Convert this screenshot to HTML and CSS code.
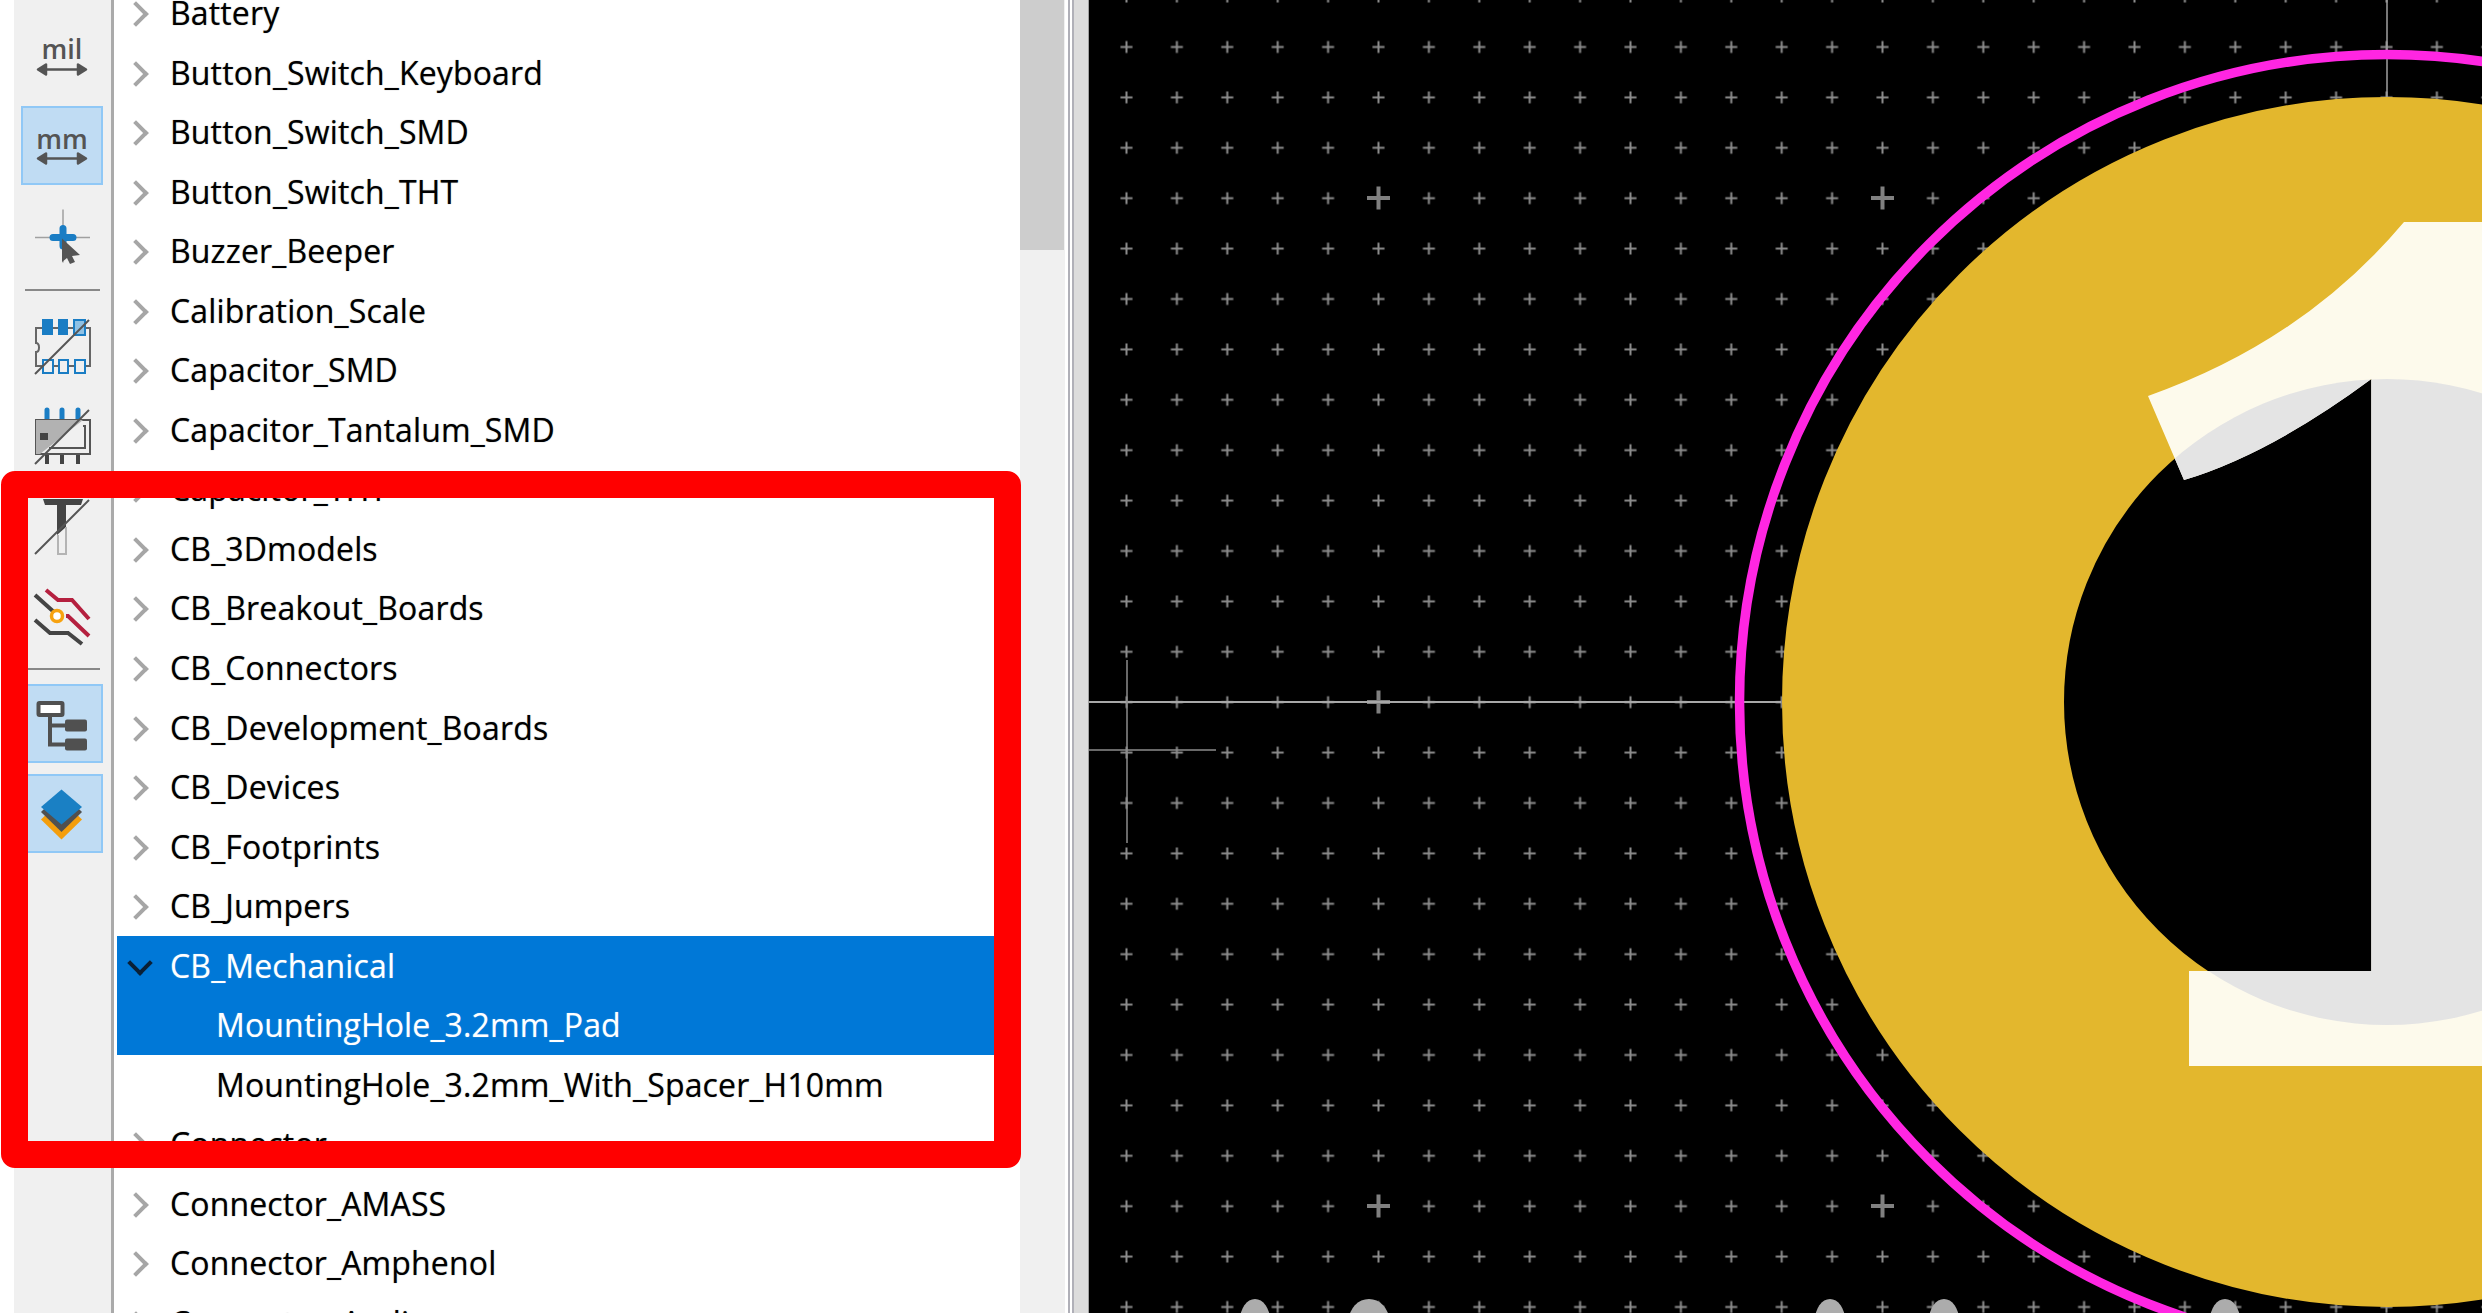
FILE: index.html
```html
<!DOCTYPE html>
<html>
<head>
    <meta charset="utf-8">
    <title>Footprint Editor</title>
    <link rel="stylesheet" href="styles.css">
</head>
<body>
<div class="app">

    <!-- left tool strip -->
    <div class="toolbar">
        <div class="tool">
            <svg class="icon" viewBox="0 0 56 56">
                <text class="unit" x="28" y="30.5" text-anchor="middle">mil</text>
                <path class="arrow" d="M8 41.5H48M4 41.5L12 36.5V46.5ZM52 41.5L44 36.5V46.5Z"/>
            </svg>
        </div>
        <div class="tool active">
            <svg class="icon" viewBox="0 0 56 56">
                <text class="unit" x="28" y="30.5" text-anchor="middle">mm</text>
                <path class="arrow" d="M8 40.5H48M4 40.5L12 35.5V45.5ZM52 40.5L44 35.5V45.5Z"/>
            </svg>
        </div>
        <div class="tool">
            <svg class="icon" viewBox="0 0 56 56">
                <path d="M1 29.5H56M29 1.5V54.5" fill="none" stroke="#a0a0a0" stroke-width="1.5"/>
                <path d="M19 29.5H39M29 20.5V38" fill="none" stroke="#1a7dc4" stroke-width="7" stroke-linecap="round"/>
                <path d="M28 30.5V54L33 50L36 56L41 54L38 48L46 47Z" fill="#555"/>
            </svg>
        </div>
        <div class="sep"></div>
        <div class="tool">
            <svg class="icon" viewBox="0 0 56 56">
                <g transform="translate(1 0)">
                    <path d="M1 9H55V47H1V33C5 33 5 24 1 24Z" fill="none" stroke="#666" stroke-width="2"/>
                    <path d="M7 0H18V16H7ZM23 0H33V16H23Z" fill="#1a7dc4"/>
                    <path d="M39 1H50V16H39Z" fill="#8fc1e4" stroke="#1a7dc4" stroke-width="2"/>
                    <path d="M8 41H18V54H8ZM24 41H33V54H24ZM40 41H50V54H40Z" fill="#f0f0f0" stroke="#1a7dc4" stroke-width="2"/>
                    <path d="M0 55L54 1" stroke="#555" stroke-width="2"/>
                </g>
            </svg>
        </div>
        <div class="tool">
            <svg class="icon" viewBox="0 0 56 56">
                <g transform="translate(1 0)">
                    <path d="M12 1V12M27 1V12M43 1V12" stroke="#1a7dc4" stroke-width="5" stroke-linecap="round"/>
                    <path d="M12 44V55M27 44V55M43 44V55" stroke="#444" stroke-width="4"/>
                    <path d="M1 11H55V45H1Z" fill="#f0f0f0" stroke="#555" stroke-width="2"/>
                    <path d="M1 11H48L5 45H1Z" fill="#b2b2b2"/>
                    <path d="M5 24H13V31H5Z" fill="#444"/>
                    <path d="M48 17H50V39H14" fill="none" stroke="#555" stroke-width="2"/>
                    <path d="M0 55L54 1" stroke="#555" stroke-width="2"/>
                </g>
            </svg>
        </div>
        <div class="tool">
            <svg class="icon" viewBox="0 0 56 56">
                <g transform="translate(1 0)">
                    <path d="M8 0H48L46 6H31V28L22 36V6H10Z" fill="#444"/>
                    <path d="M23 36V55H31V28" fill="none" stroke="#b4b4b4" stroke-width="2"/>
                    <path d="M0 55L54 1" stroke="#555" stroke-width="2"/>
                </g>
            </svg>
        </div>
        <div class="tool">
            <svg class="icon" viewBox="0 0 56 56">
                <g transform="translate(1 0)">
                    <path d="M11 1L23 11H37L54 30M31 27H33L54 47" fill="none" stroke="#b5203f" stroke-width="4"/>
                    <path d="M0 6L20 24M0 31L15 44H33L47 55" fill="none" stroke="#444" stroke-width="4"/>
                    <circle cx="22" cy="27" r="5.5" fill="#fff" stroke="#f7a20f" stroke-width="3.5"/>
                </g>
            </svg>
        </div>
        <div class="sep tight"></div>
        <div class="tool active">
            <svg class="icon" viewBox="0 0 56 56">
                <path d="M16 19V48.5H32M16 29.5H32" fill="none" stroke="#505050" stroke-width="4"/>
                <rect x="4.5" y="7" width="24" height="12" rx="1" fill="#fff" stroke="#505050" stroke-width="4"/>
                <rect x="31" y="23.5" width="22" height="12" rx="2" fill="#505050"/>
                <rect x="31" y="42.5" width="22" height="12" rx="2" fill="#505050"/>
            </svg>
        </div>
        <div class="tool active">
            <svg class="icon" viewBox="0 0 56 56">
                <path d="M7 33.5L27.5 13.5L48 33.5L27.5 53.5Z" fill="#f49e0c"/>
                <path d="M7 26L27.5 6L48 26L27.5 46Z" fill="#505050"/>
                <path d="M7 21L27.5 3.5L48 21L27.5 38.5Z" fill="#1a80c4"/>
            </svg>
        </div>
    </div>

    <!-- footprint library tree -->
    <div class="tree">
        <div class="row">Battery</div>
        <div class="row">Button_Switch_Keyboard</div>
        <div class="row">Button_Switch_SMD</div>
        <div class="row">Button_Switch_THT</div>
        <div class="row">Buzzer_Beeper</div>
        <div class="row">Calibration_Scale</div>
        <div class="row">Capacitor_SMD</div>
        <div class="row">Capacitor_Tantalum_SMD</div>
        <div class="row">Capacitor_THT</div>
        <div class="row">CB_3Dmodels</div>
        <div class="row">CB_Breakout_Boards</div>
        <div class="row">CB_Connectors</div>
        <div class="row">CB_Development_Boards</div>
        <div class="row">CB_Devices</div>
        <div class="row">CB_Footprints</div>
        <div class="row">CB_Jumpers</div>
        <div class="row open selected">CB_Mechanical</div>
        <div class="row child selected">MountingHole_3.2mm_Pad</div>
        <div class="row child">MountingHole_3.2mm_With_Spacer_H10mm</div>
        <div class="row">Connector</div>
        <div class="row">Connector_AMASS</div>
        <div class="row">Connector_Amphenol</div>
        <div class="row">Connector_Audio</div>
    </div>

    <div class="scrollbar"><div class="thumb"></div></div>
    <div class="splitter"></div>

    <!-- footprint canvas -->
    <div class="canvas">
        <svg class="board" viewBox="1089 0 1393 1313">
            <defs>
                <pattern id="grid" x="1353.3" y="173" width="50.4" height="50.4" patternUnits="userSpaceOnUse">
                    <path d="M19.2 25.2H31.2M25.2 19.2V31.2" stroke="#8c8c8c" stroke-width="2"/>
                </pattern>
                <filter id="soft"><feGaussianBlur stdDeviation="0.7"/></filter>
                <clipPath id="hole"><circle cx="2387" cy="702" r="323"/></clipPath>
                <path id="one" d="M2404 222H2482V1066H2189V971H2371.3V379Q2270 454 2184 480L2148 396Q2304 341 2404 222Z"/>
            </defs>
            <rect x="1089" y="0" width="1393" height="1313" fill="url(#grid)"/>
            <path d="M1367 198H1390M1378.5 186.5V209.5M1871 198H1894M1882.5 186.5V209.5M1367 702H1390M1378.5 690.5V713.5M1367 1206H1390M1378.5 1194.5V1217.5M1871 1206H1894M1882.5 1194.5V1217.5" stroke="#808080" stroke-width="4" filter="url(#soft)"/>
            <path d="M1089 702H1781" stroke="#a8a8a8" stroke-width="2"/>
            <path d="M2387 0V97" stroke="#a0a0a0" stroke-width="1.5"/>
            <path d="M1127 660V843M1089 750H1216" stroke="#8c8c8c" stroke-width="1.5"/>
            <ellipse cx="1255" cy="1320" rx="15" ry="21" fill="#acacac"/>
            <ellipse cx="1369" cy="1320" rx="20" ry="21" fill="#acacac"/>
            <ellipse cx="1830" cy="1320" rx="15" ry="21" fill="#acacac"/>
            <ellipse cx="1944" cy="1320" rx="15" ry="21" fill="#acacac"/>
            <ellipse cx="2225" cy="1320" rx="15" ry="21" fill="#acacac"/>
            <circle cx="2387" cy="702" r="647.5" fill="none" stroke="#ff26e2" stroke-width="9.5"/>
            <circle cx="2387" cy="702" r="464" fill="#000" stroke="#e3b72d" stroke-width="282"/>
            <use href="#one" fill="#fdfaec"/>
            <use href="#one" fill="#e4e4e4" clip-path="url(#hole)"/>
        </svg>
    </div>

    <!-- red highlight from the article this was cropped for -->
    <div class="highlight"></div>
</div>
</body>
</html>
```
FILE: styles.css
```css
html, body {
    margin: 0;
    height: 100%;
    overflow: hidden;
    background: #fff;
}

.app {
    position: relative;
    display: flex;
    width: 2482px;
    height: 1313px;
    overflow: hidden;
    font-family: "Open Sans", "Liberation Sans", sans-serif;
}

.toolbar {
    box-sizing: border-box;
    flex: none;
    width: 100px;
    margin-left: 14px;
    padding: 16px 7px 0;
    display: flex;
    flex-direction: column;
    gap: 11px;
    background: #f0f0f0;
    border-right: 3px solid #aaa;
}

.tool {
    box-sizing: border-box;
    flex: none;
    width: 82px;
    height: 79px;
    display: flex;
    align-items: center;
    justify-content: center;
    border: 2px solid transparent;
}

.tool.active {
    background: #c0dcf3;
    border-color: #90c8f6;
}

.icon {
    width: 56px;
    height: 56px;
    overflow: visible;
}

.unit {
    font-size: 27px;
    font-weight: 600;
    fill: #545454;
}

.arrow {
    fill: #545454;
    stroke: #545454;
    stroke-width: 2.5;
    stroke-linejoin: round;
}

.sep {
    height: 2px;
    margin: 3px 4px 5px;
    background: #888;
}

.sep.tight {
    margin: 1px 4px 3px;
}

.tree {
    box-sizing: border-box;
    flex: none;
    width: 906px;
    padding: 0 0 0 3px;
    margin-top: -17px;
    background: #fff;
}

.row {
    position: relative;
    height: 59.55px;
    line-height: 59.55px;
    padding-left: 53px;
    font-size: 32px;
    letter-spacing: 0.15px;
    color: #000;
    text-shadow: 0 0 1px rgba(0, 0, 0, 0.5);
    white-space: nowrap;
}

/* closed arrow */
.row::before {
    content: "";
    position: absolute;
    left: 10px;
    top: 22px;
    width: 14px;
    height: 14px;
    border-top: 4px solid #a6a6a6;
    border-right: 4px solid #a6a6a6;
    transform: rotate(45deg);
}

.row.open::before {
    left: 14px;
    top: 18px;
    border-color: #0a2036;
    transform: rotate(135deg);
}

.row.child {
    padding-left: 99px;
}

.row.child::before {
    display: none;
}

.row.selected {
    background: #0078d7;
    color: #fff;
    text-shadow: 0 0 1px rgba(255, 255, 255, 0.5);
}

.scrollbar {
    flex: none;
    width: 45px;
    background: #f0f0f0;
}

.thumb {
    width: 44px;
    height: 250px;
    background: #cdcdcd;
}

.splitter {
    box-sizing: border-box;
    flex: none;
    width: 24px;
    background: linear-gradient(to right, #fff 0, #fff 3px, #b0b0b8 3px, #b0b0b8 5px, #fff 5px, #fff 7px, #b0b0b8 7px, #b0b0b8 9px, #dcdcdc 9px);
    border-right: 1px solid #a0a0a0;
}

.canvas {
    flex: none;
    width: 1393px;
    height: 1313px;
    background: #000;
}

.board {
    display: block;
    width: 1393px;
    height: 1313px;
}

.highlight {
    position: absolute;
    box-sizing: border-box;
    left: 1px;
    top: 471px;
    width: 1020px;
    height: 697px;
    border: 27px solid #f00;
    border-radius: 14px;
}
```
